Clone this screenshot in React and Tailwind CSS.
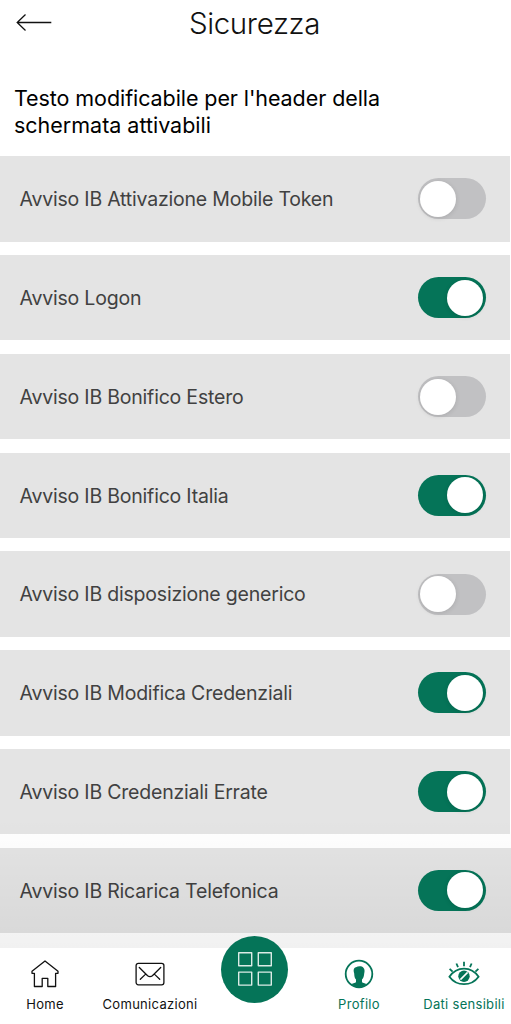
import { useState } from "react";

const NOTICES = [
  { id: "token", label: "Avviso IB Attivazione Mobile Token", on: false },
  { id: "logon", label: "Avviso Logon", on: true },
  { id: "estero", label: "Avviso IB Bonifico Estero", on: false },
  { id: "italia", label: "Avviso IB Bonifico Italia", on: true },
  { id: "generico", label: "Avviso IB disposizione generico", on: false },
  { id: "modifica", label: "Avviso IB Modifica Credenziali", on: true },
  { id: "errate", label: "Avviso IB Credenziali Errate", on: true },
  { id: "ricarica", label: "Avviso IB Ricarica Telefonica", on: true },
];

const BackIcon = () => (
  <svg width="36" height="18" viewBox="0 0 36 18" fill="none" stroke="#111" strokeWidth="1.3">
    <path d="M9.5 0.5 1.2 8.5l8.3 8M1.2 8.5H35.3" />
  </svg>
);

const HomeIcon = () => (
  <svg width="28" height="28" viewBox="0 0 28 28" fill="none" stroke="#111" strokeWidth="1.3" strokeLinejoin="round">
    <path d="M14 1 1 11.3v2h2.4v13.2h7.8v-8.2h5.6v8.2h7.8V13.3H27v-2Z" />
  </svg>
);

const MailIcon = () => (
  <svg width="30" height="28" viewBox="0 0 30 28" fill="none" stroke="#111" strokeWidth="1.3" strokeLinecap="round">
    <rect x="1.1" y="3.4" width="27.8" height="21.4" rx="2.2" />
    <path d="M4.3 7.5 12.6 15.7q2.4 1.7 4.8 0L25.7 7.5M5.3 19.2l4.8-4.6M24.7 19.2l-4.8-4.6" />
  </svg>
);

const GridIcon = () => (
  <svg width="34" height="34" viewBox="0 0 34 34" fill="none" stroke="#dcebe6" strokeWidth="1.4" strokeLinejoin="round">
    <rect x="0.7" y="0.7" width="13" height="13" />
    <rect x="20.3" y="0.7" width="13" height="13" />
    <rect x="0.7" y="20.1" width="13" height="13" />
    <rect x="20.3" y="20.1" width="13" height="13" />
  </svg>
);

const ProfileIcon = () => (
  <svg width="30" height="30" viewBox="0 0 30 30" fill="none">
    <circle cx="15" cy="15" r="13.3" stroke="#057458" strokeWidth="1.8" />
    <path
      d="M10.2 14.5C9.3 11.5 9.4 8.8 12 8.3c2.4-1.6 6-1.3 7.4.4 1.5 1.6 1.3 3.6.8 5.8-.2 3-1 4.7-2.2 6v2.400c.7 1 2.600 1.300 4.500 2-3.800 4.200-11.200 4.200-15 0 1.900-.7 3.800-1 4.500-2v-2.400c-1.200-1.300-1.700-3-1.800-6Z"
      fill="#057458"
    />
  </svg>
);

const EyeIcon = () => (
  <svg width="32" height="26" viewBox="0 0 32 26" fill="none" stroke="#057458" strokeWidth="1.8">
    <path d="M1.4 15.7C8.8 4.8 23.2 4.8 30.6 15.7 23.2 25.7 8.8 25.7 1.4 15.7Z" />
    <path d="M16 0.8v4.4M8.4 2.500l1.600 3.600M23.600 2.500 22 6.100M1.600 7.900l3 2.800M30.400 7.900l-3 2.800" />
    <circle cx="16" cy="15.2" r="5.7" fill="#057458" stroke="none" />
    <path d="m12.4 18.6 7.2-7.2" stroke="#fff" strokeWidth="1.6" />
  </svg>
);

function Toggle({ on, onChange, label }) {
  return (
    <button
      type="button"
      role="switch"
      aria-checked={on}
      aria-label={label}
      onClick={onChange}
      className={`relative z-10 flex h-[41px] w-[68px] shrink-0 items-center rounded-full px-[2.5px] ${
        on ? "justify-end bg-[#057458]" : "justify-start bg-[#c1c1c3]"
      }`}
    >
      <span className="size-9 rounded-full bg-white shadow-[0_1px_5px_rgba(0,0,0,0.12)]" />
    </button>
  );
}

function NavItem({ icon, label, active, className }) {
  return (
    <div className={`flex flex-col items-center ${className}`}>
      <div className="flex h-8 items-center">{icon}</div>
      <span
        className={`mt-1 whitespace-nowrap text-[13px] leading-5 tracking-[0.3px] ${
          active ? "text-[#057458]" : "text-[#111]"
        }`}
      >
        {label}
      </span>
    </div>
  );
}

export default function App() {
  const [notices, setNotices] = useState(NOTICES);

  function toggle(id) {
    setNotices((ns) => ns.map((n) => (n.id === id ? { ...n, on: !n.on } : n)));
  }

  return (
    <div className="relative flex h-[1024px] w-[511px] flex-col overflow-hidden bg-white font-['Inter',sans-serif]">
      {/* Header */}
      <header className="grid h-[46px] shrink-0 grid-cols-[1fr_auto_1fr] items-center pl-4 pr-[18px]">
        <BackIcon />
        <h1 className="pt-px text-[29.5px] font-light leading-none tracking-[-0.35px] text-[#111]">Sicurezza</h1>
      </header>

      <p className="mt-[39px] h-[71.3px] shrink-0 whitespace-nowrap pl-[14px] text-[21.5px] leading-[26.5px] tracking-[-0.08px] text-black">
        Testo modificabile per l'header della
        <br />
        <span className="tracking-[-0.01px]">schermata attivabili</span>
      </p>

      {/* Notices */}
      <ul className="flex min-h-0 flex-1 flex-col gap-[13.4px]">
        {notices.map((n) => (
          <li
            key={n.id}
            className="flex h-[85.4px] w-[509.5px] shrink-0 items-center justify-between bg-[#e4e4e4] pl-[19.5px] pr-6 last:w-full last:pr-[25.5px]"
          >
            <span className="whitespace-nowrap pt-0.5 text-[19.5px] tracking-[-0.2px] text-[#414141]">{n.label}</span>
            <Toggle on={n.on} label={n.label} onChange={() => toggle(n.id)} />
          </li>
        ))}
      </ul>

      {/* Bottom bar, its shadow fades up over the list */}
      <nav className="relative h-[76px] shrink-0 bg-white">
        <div className="pointer-events-none absolute inset-x-0 bottom-full h-[130px] bg-linear-to-t from-black/[0.055] to-transparent" />
        <div className="flex h-full pt-[10px]">
          <NavItem icon={<HomeIcon />} label="Home" className="w-[90px]" />
          <NavItem icon={<MailIcon />} label="Comunicazioni" className="w-[120px]" />
          <div className="w-[89px]" />
          <NavItem icon={<ProfileIcon />} label="Profilo" active className="w-[120px]" />
          <NavItem icon={<EyeIcon />} label="Dati sensibili" active className="w-[90px]" />
        </div>
        <button
          type="button"
          aria-label="Menu"
          className="absolute -top-3 left-[221px] flex size-[67px] items-center justify-center rounded-full bg-[#057458] pb-px"
        >
          <GridIcon />
        </button>
      </nav>
    </div>
  );
}
